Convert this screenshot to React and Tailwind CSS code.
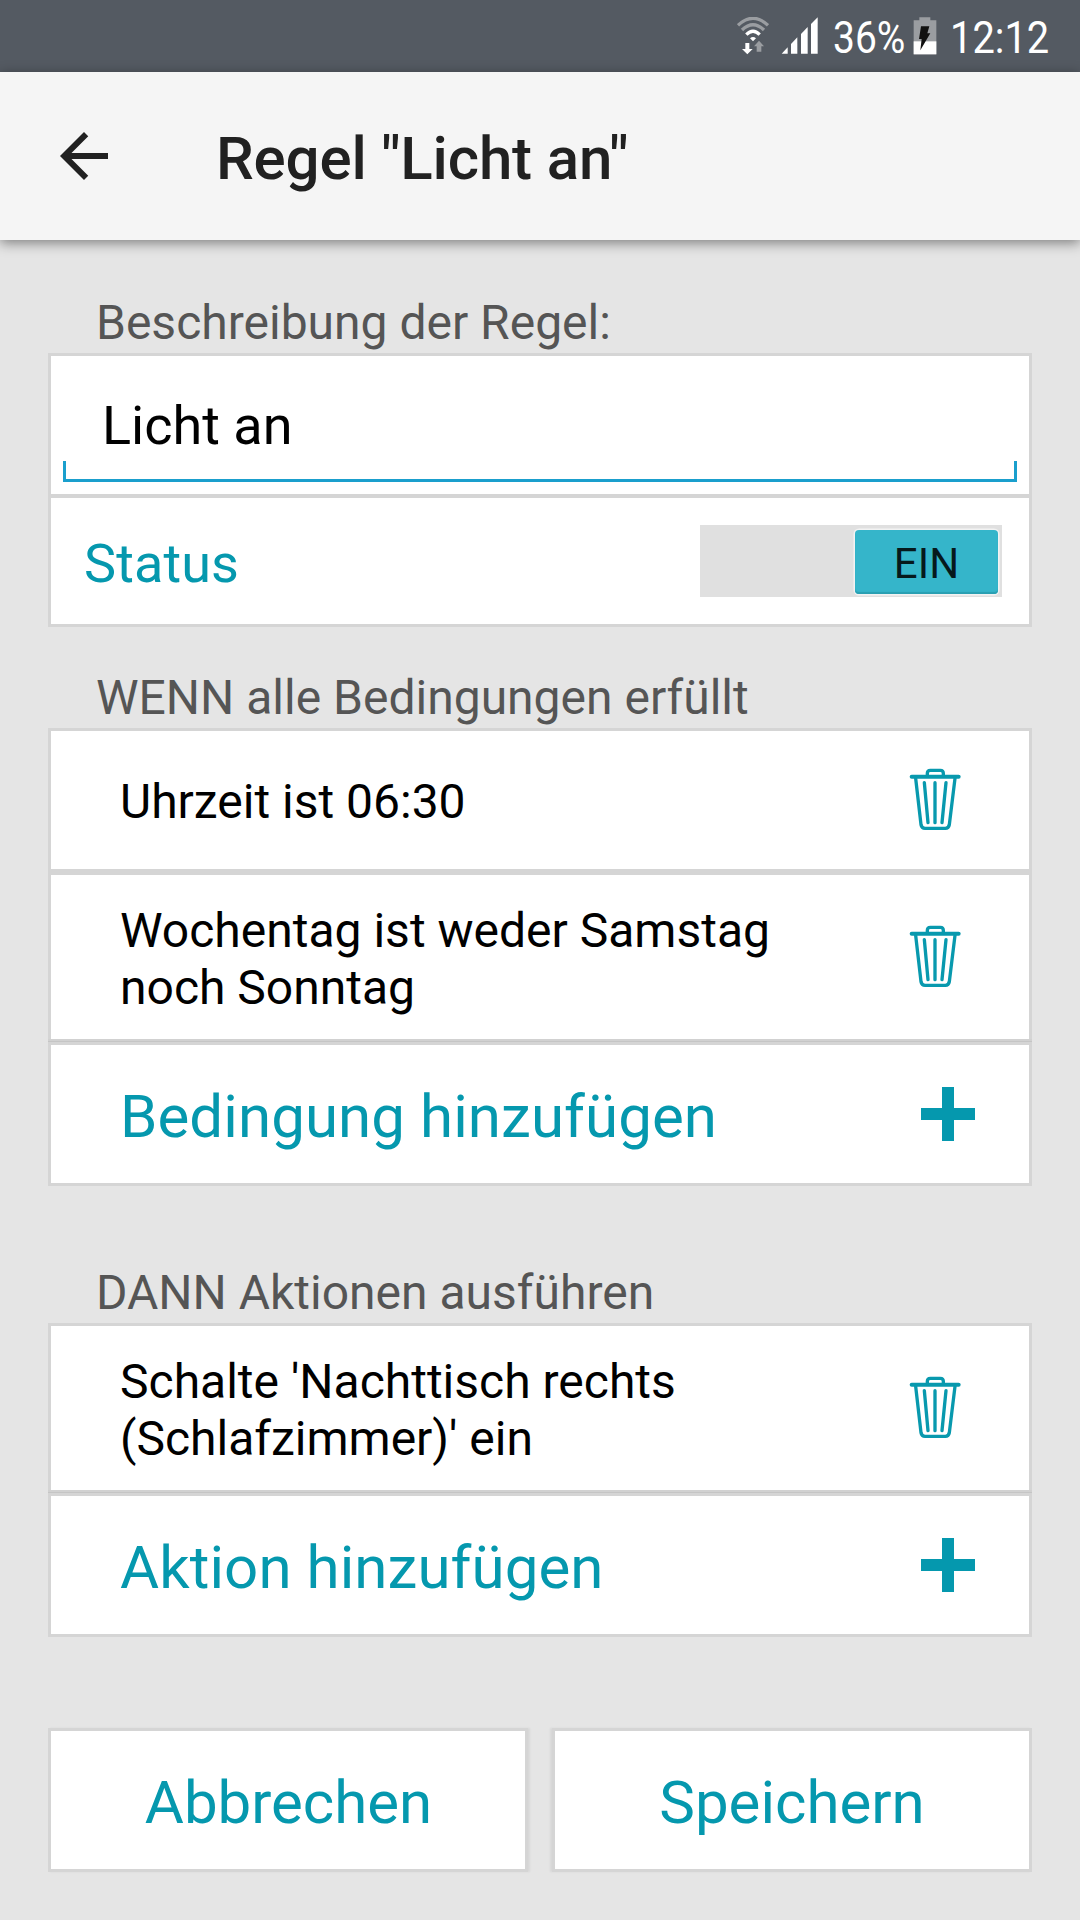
import { useState } from "react";

const conditions = ["Uhrzeit ist 06:30", "Wochentag ist weder Samstag noch Sonntag"];
const actions = ["Schalte 'Nachttisch rechts (Schlafzimmer)' ein"];

function WifiIcon() {
  return (
    <svg width="32" height="38" viewBox="0 0 96 114" fill="none">
      <path d="M3 25 Q48 -17 93 25" stroke="#9a9da1" strokeWidth="10" />
      <path d="M15 39 Q48 8 81 39" stroke="#9a9da1" strokeWidth="10" />
      <path d="M28 53 Q48 33 68 53" stroke="#fff" strokeWidth="10" />
      <path d="M39 64 Q48 56 57 64 L48 73Z" fill="#fff" />
      <path d="M25 78h12v18h10L31 112 15 96h10z" fill="#fff" />
      <path d="M59 104h14V88h8L66 71 51 88h8z" fill="#9a9da1" />
    </svg>
  );
}

function SignalIcon() {
  return (
    <svg width="37" height="37" viewBox="0 0 111 111" fill="#fff">
      <path d="M2 110 L20 91 V110Z" />
      <path d="M30 81 L49 61 V110 H30Z" />
      <path d="M60 51 L80 30 V110 H60Z" />
      <path d="M90 21 L110 1 V110 H90Z" />
    </svg>
  );
}

function BatteryIcon() {
  return (
    <svg width="24" height="38" viewBox="0 0 72 114">
      <path d="M19 1h33v9h18v102H2V10h17z" fill="#9a9da1" />
      <path d="M2 73h68v39H2z" fill="#fff" />
      <path d="M24 28h25l-6 21h9L22 100l4-34h-8z" fill="#111" />
    </svg>
  );
}

function TrashIcon() {
  return (
    <svg width="52" height="64" viewBox="0 0 156 192" fill="none" stroke="#0899ae" strokeWidth="10" strokeLinecap="round" strokeLinejoin="round">
      <path d="M8 29h141" strokeWidth="12" />
      <path d="M55 26v-7q0-9 9-9h30q9 0 9 9v7" />
      <path d="M20 34l16 139q2 11 12 11h61q10 0 12-11l17-139" />
      <path d="M46 47l11 120M78 47v120M111 47l-12 120" />
    </svg>
  );
}

function Label({ children }) {
  return <div className="pl-12 pb-0.5 text-[48px] leading-[57px] text-[#555]">{children}</div>;
}

function RuleRow({ text, className }) {
  return (
    <div className={`flex items-center justify-between bg-white pl-[69px] pr-[68px] ${className}`}>
      <div className="w-[700px] pt-[3px] text-[48px] leading-[57px] text-black">{text}</div>
      <button className="pb-0.5">
        <TrashIcon />
      </button>
    </div>
  );
}

function AddRow({ text }) {
  return (
    <button className="flex h-[138px] w-full items-center justify-between bg-white pl-[69px] pr-[54px]">
      <span className="pt-[5px] text-[60px] leading-[70px] tracking-[0.08px]">{text}</span>
      <svg width="54" height="54" viewBox="0 0 54 54" fill="#0598ae">
        <path d="M21 0h12v21h21v12H33v21H21V33H0V21h21z" />
      </svg>
    </button>
  );
}

// double border between a row and the "add" button, with the row's shadow line
function Divider() {
  return (
    <div className="-mx-[3px] h-1.5 border-b-[3px] border-[#d5d5d5] bg-[#d1d1d1] pt-0.5">
      <div className="h-px bg-[#c5c5c5]" />
    </div>
  );
}

export default function App() {
  const [name, setName] = useState("Licht an");
  const [enabled, setEnabled] = useState(true);

  return (
    <div className="flex h-[1920px] w-[1080px] flex-col overflow-hidden bg-[#e5e5e5] font-['Roboto',sans-serif] text-[#0598ae]">
      <div className="flex h-[72px] shrink-0 bg-[#545a62] pl-[737px] pt-[17px] text-[45px] text-white">
        <WifiIcon />
        <div className="ml-3">
          <SignalIcon />
        </div>
        <div className="ml-[15px] mt-px w-[73px] origin-left scale-x-[0.865] whitespace-nowrap leading-[40px]">36%</div>
        <div className="ml-[7px]">
          <BatteryIcon />
        </div>
        <div className="ml-[13px] mt-px origin-left scale-x-[0.885] whitespace-nowrap leading-[40px]">12:12</div>
      </div>

      <header className="flex h-[168px] shrink-0 items-center bg-[#f5f5f5] pl-12 shadow-[0_3px_12px_rgba(0,0,0,0.45)]">
        <button>
          <svg width="72" height="72" viewBox="0 0 24 24" fill="#212121">
            <path d="M20 11H7.83l5.59-5.59L12 4l-8 8 8 8 1.41-1.41L7.83 13H20v-2z" />
          </svg>
        </button>
        <h1 className="ml-24 pt-[5px] text-[60px] font-medium leading-[70px] tracking-[-0.15px] text-[#212121]">Regel "Licht an"</h1>
      </header>

      <main className="flex flex-col px-12 pt-[54px]">
        <Label>Beschreibung der Regel:</Label>
        <section className="border-[3px] border-[#d5d5d5]">
          <div className="h-[138px] bg-white px-3 pt-[35px]">
            <input
              value={name}
              onChange={(e) => setName(e.target.value)}
              className="block h-[68px] w-full pl-[39px] text-[54px] leading-[64px] text-black outline-none"
            />
            <div className="mt-0.5 h-[21px] border-x-[3px] border-b-[3px] border-[#1a9fcd]" />
          </div>
          <div className="flex h-[130px] items-center justify-between border-t-4 border-[#d5d5d5] bg-white pl-[33px] pr-[27px]">
            <span className="pt-[5px] text-[54px] leading-[64px] tracking-[0.1px]">Status</span>
            <button
              onClick={() => setEnabled(!enabled)}
              className={`flex h-[72px] w-[302px] items-center bg-[#e0e0e0] px-1 pt-px ${enabled ? "justify-end" : "justify-start"}`}
            >
              <span className="flex h-16 w-[143px] items-center justify-center rounded-[4px] bg-[#35b5ca] pt-[3px] text-[42px] text-[#06191c] shadow-[0_0_0_1.5px_#f3f3f3,inset_0_-2px_1px_#2a9fb2]">
                {enabled ? "EIN" : "AUS"}
              </span>
            </button>
          </div>
        </section>

        <div className="mt-[42px]">
          <Label>WENN alle Bedingungen erfüllt</Label>
        </div>
        <section className="border-[3px] border-[#d5d5d5]">
          <RuleRow text={conditions[0]} className="h-[138px]" />
          <div className="h-1.5 bg-[#d5d5d5]" />
          <RuleRow text={conditions[1]} className="h-[164px]" />
          <Divider />
          <AddRow text="Bedingung hinzufügen" />
        </section>

        <div className="mt-[78px]">
          <Label>DANN Aktionen ausführen</Label>
        </div>
        <section className="border-[3px] border-[#d5d5d5]">
          {actions.map((text) => (
            <RuleRow key={text} text={text} className="h-[164px]" />
          ))}
          <Divider />
          <AddRow text="Aktion hinzufügen" />
        </section>

        <div className="mt-[91px] flex justify-between">
          <button className="h-36 w-[480px] border-[3px] border-[#d5d5d5] bg-white pt-[5px] pl-px text-[60px] shadow-[2px_0_2px_rgba(0,0,0,0.06)]">Abbrechen</button>
          <button className="h-36 w-[480px] border-[3px] border-[#d5d5d5] bg-white pt-[5px] text-[60px] shadow-[-2px_0_2px_rgba(0,0,0,0.06)]">Speichern</button>
        </div>
      </main>
    </div>
  );
}
